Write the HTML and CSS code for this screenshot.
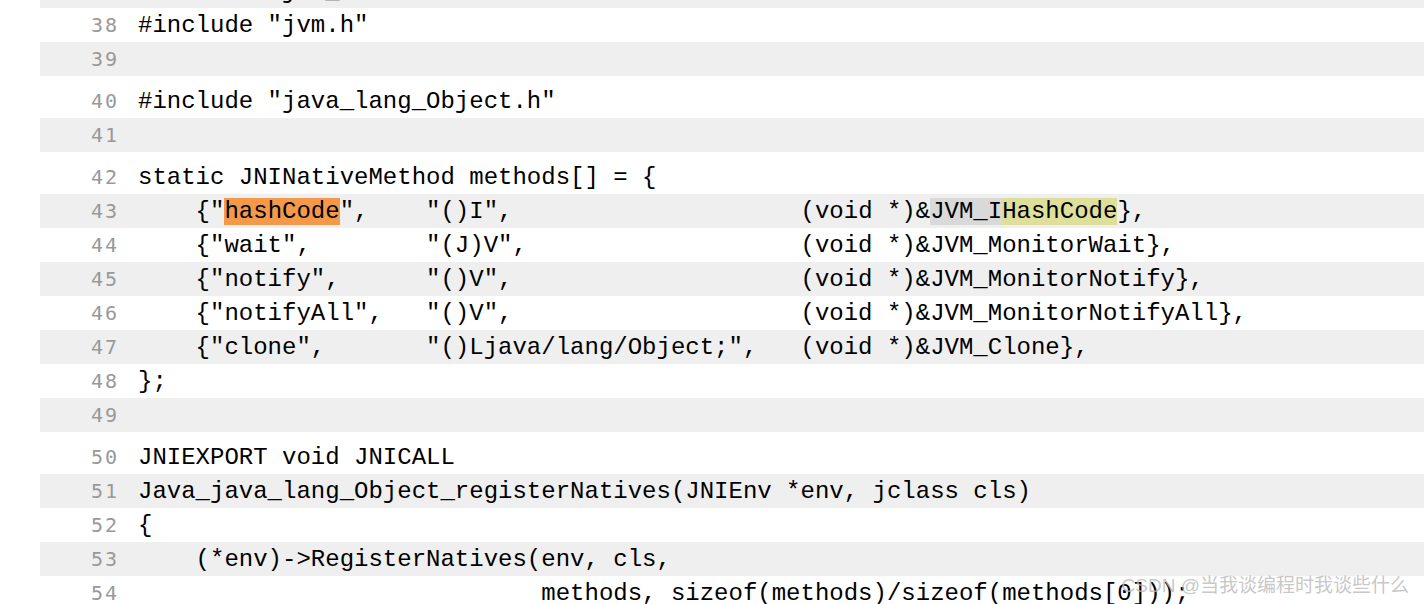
FILE: index.html
```html
<!DOCTYPE html>
<html>
<head>
<meta charset="utf-8">
<link rel="stylesheet" href="styles.css">
</head>
<body>
<div class="code">
  <div class="row odd"><span class="ln">37</span><span class="src">#include "jni_util.h"</span></div>
  <div class="row"><span class="ln">38</span><span class="src">#include "jvm.h"</span></div>
  <div class="row odd"><span class="ln">39</span><span class="src"></span></div>
  <div class="row tall"><span class="ln">40</span><span class="src">#include "java_lang_Object.h"</span></div>
  <div class="row odd"><span class="ln">41</span><span class="src"></span></div>
  <div class="row tall"><span class="ln">42</span><span class="src">static JNINativeMethod methods[] = {</span></div>
  <div class="row odd"><span class="ln">43</span><span class="src">    {"<span class="hl-orange">hashCode</span>",    "()I",                    (void *)&amp;<span class="hl-gray">JVM_I</span><span class="hl-yellow">HashCode</span>},</span></div>
  <div class="row"><span class="ln">44</span><span class="src">    {"wait",        "(J)V",                   (void *)&amp;JVM_MonitorWait},</span></div>
  <div class="row odd"><span class="ln">45</span><span class="src">    {"notify",      "()V",                    (void *)&amp;JVM_MonitorNotify},</span></div>
  <div class="row"><span class="ln">46</span><span class="src">    {"notifyAll",   "()V",                    (void *)&amp;JVM_MonitorNotifyAll},</span></div>
  <div class="row odd"><span class="ln">47</span><span class="src">    {"clone",       "()Ljava/lang/Object;",   (void *)&amp;JVM_Clone},</span></div>
  <div class="row"><span class="ln">48</span><span class="src">};</span></div>
  <div class="row odd"><span class="ln">49</span><span class="src"></span></div>
  <div class="row tall"><span class="ln">50</span><span class="src">JNIEXPORT void JNICALL</span></div>
  <div class="row odd"><span class="ln">51</span><span class="src">Java_java_lang_Object_registerNatives(JNIEnv *env, jclass cls)</span></div>
  <div class="row"><span class="ln">52</span><span class="src">{</span></div>
  <div class="row odd"><span class="ln">53</span><span class="src">    (*env)-&gt;RegisterNatives(env, cls,</span></div>
  <div class="row"><span class="ln">54</span><span class="src">                            methods, sizeof(methods)/sizeof(methods[0]));</span></div>
</div>
<div class="watermark">CSDN @当我谈编程时我谈些什么</div>
</body>
</html>
```

FILE: styles.css
```css
html, body {
  margin: 0;
  padding: 0;
  background: #ffffff;
  overflow: hidden;
  height: 604px;
}

.code {
  margin-left: 40px;
  margin-top: -26px;
}

.row {
  display: flex;
  align-items: center;
  height: 34px;
  background: #ffffff;
}

.row.odd {
  background: #efefef;
}

.row.tall {
  height: 42px;
  padding-top: 8px;
  box-sizing: border-box;
}

.ln {
  width: 79px;
  box-sizing: border-box;
  text-align: right;
  font-family: "DejaVu Sans Mono", monospace;
  font-size: 20px;
  letter-spacing: 2px;
  color: #999999;
  flex: none;
}

.src {
  margin-left: 19px;
  white-space: pre;
  font-family: "Liberation Mono", "Courier New", monospace;
  font-size: 24px;
  color: #000000;
}

.hl-orange {
  background: #f4994a;
}

.hl-gray {
  background: #d9d9d9;
}

.hl-yellow {
  background: #dfdf9c;
}

.watermark {
  position: absolute;
  right: 15px;
  bottom: 7px;
  font-family: "Liberation Sans", "Noto Sans CJK SC", sans-serif;
  font-size: 19px;
  color: rgba(185, 185, 185, 0.8);
  white-space: nowrap;
}
```
